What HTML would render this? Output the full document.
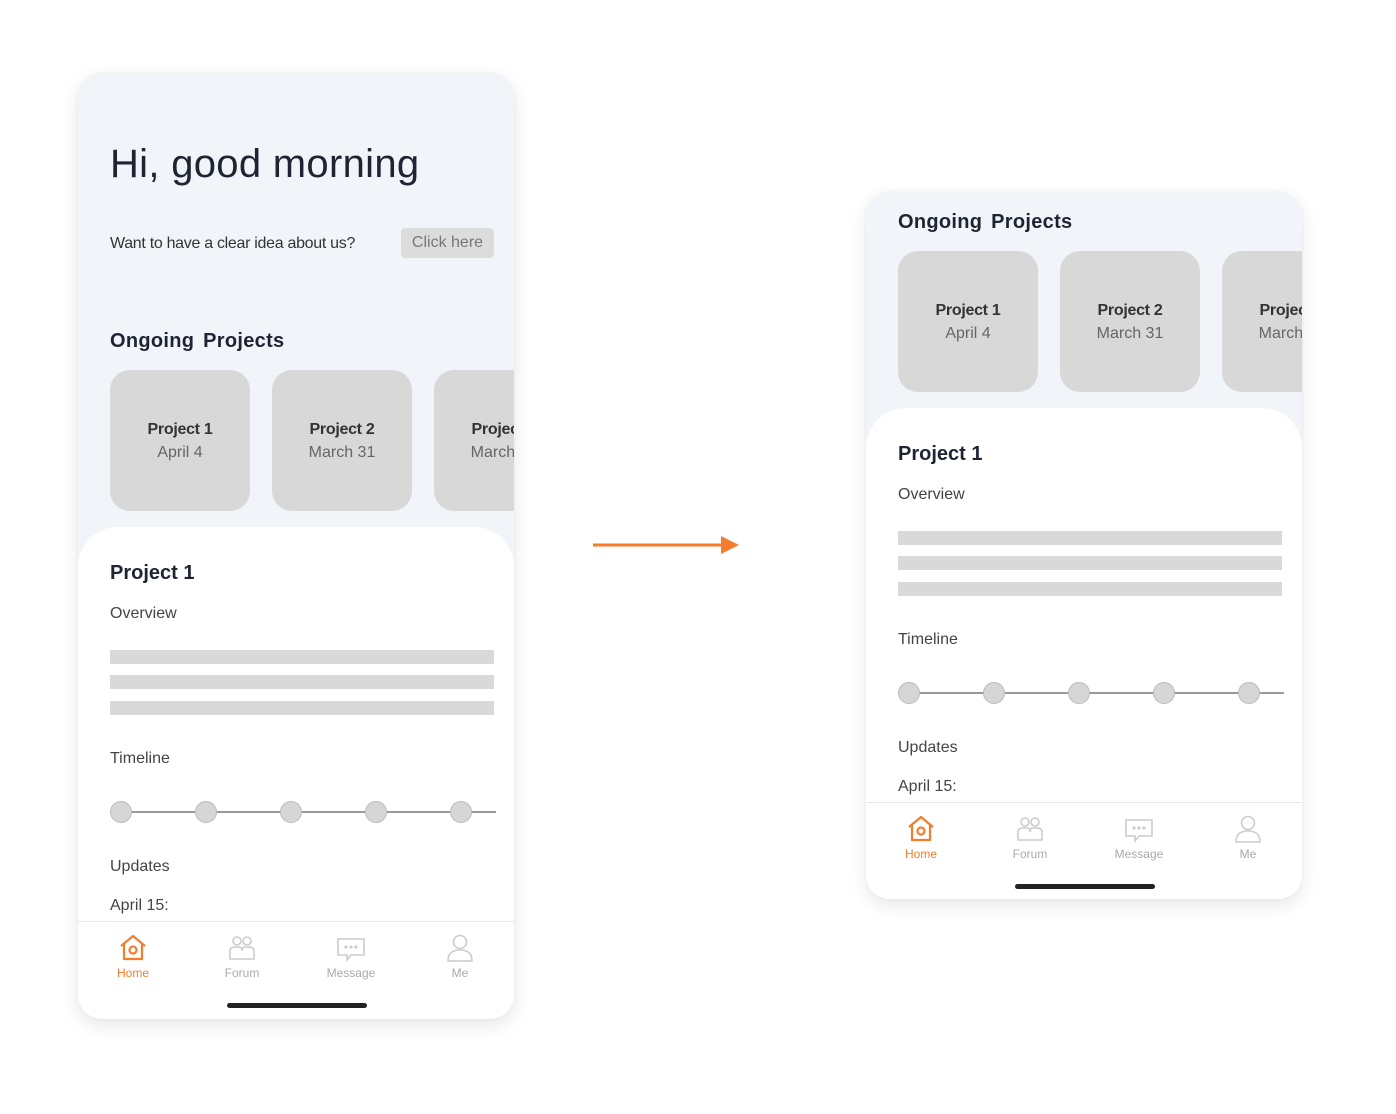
<!DOCTYPE html>
<html><head><meta charset="utf-8"><style>
*{margin:0;padding:0;box-sizing:border-box}
body{width:1396px;height:1114px;background:#fff;position:relative;overflow:hidden;font-family:"Liberation Sans",sans-serif}
.phone{position:absolute;width:436px;border-radius:24px;overflow:hidden;background:#fff;box-shadow:0 6px 18px rgba(0,0,0,0.10),0 0 3px rgba(0,0,0,0.04)}
.inner{position:absolute;left:0;width:436px;height:946px;background:#f1f4f9}
.a{position:absolute;white-space:nowrap}
.h1{left:32px;top:69px;font-size:40px;color:#1f2433;letter-spacing:0.3px}
.q{left:32px;top:162px;font-size:16px;color:#333;letter-spacing:-0.3px}
.btn{left:323px;top:155px;width:93px;height:30px;background:#dcdcdc;border-radius:4px;color:#777;font-size:16px;text-align:center;line-height:30px}
.og{left:32px;top:257px;font-size:20px;font-weight:bold;color:#1f2433;letter-spacing:0.3px;word-spacing:3px}
.card{position:absolute;top:297px;width:140px;height:141px;border-radius:20px;background:#d8d8d8;text-align:center;padding-top:51px;font-size:16px}
.card b{display:block;color:#333;letter-spacing:-0.3px}
.card span{display:block;color:#666;margin-top:5px}
.white{position:absolute;left:0;top:454px;width:436px;height:492px;background:#fff;border-radius:40px 40px 0 0}
.p1{left:32px;top:489px;font-size:20px;font-weight:bold;color:#1f2433}
.lab{left:32px;font-size:16px;color:#444}
.bar{position:absolute;left:32px;width:384px;height:14px;background:#d9d9d9}
.line{position:absolute;left:40px;top:738px;width:378px;height:2px;background:#999}
.dot{position:absolute;top:728px;width:22px;height:22px;border-radius:50%;background:#d6d6d6;border:1.5px solid #bbb}
.sep{position:absolute;left:0;top:848px;width:436px;height:1px;background:#e8e8e8}
.tab{position:absolute;top:860px;width:80px;text-align:center;font-size:12px;color:#aaa}
.tab svg{display:block;margin:0 auto 3px}
.ind{position:absolute;left:149px;top:930px;width:140px;height:5px;border-radius:3px;background:#222}
</style></head><body>

<div class="phone" style="left:78px;top:73px;height:946px">
<div class="inner" style="top:0">
<div class="a h1">Hi, good morning</div>
<div class="a q">Want to have a clear idea about us?</div>
<div class="a btn">Click here</div>
<div class="a og">Ongoing  Projects</div>
<div class="card" style="left:32px"><b>Project 1</b><span>April 4</span></div>
<div class="card" style="left:194px"><b>Project 2</b><span>March 31</span></div>
<div class="card" style="left:356px"><b>Project 3</b><span>March 30</span></div>
<div class="white"></div>
<div class="a p1">Project 1</div>
<div class="a lab" style="top:532px">Overview</div>
<div class="bar" style="top:577px"></div>
<div class="bar" style="top:602px"></div>
<div class="bar" style="top:628px"></div>
<div class="a lab" style="top:677px">Timeline</div>
<div class="line"></div>
<div class="dot" style="left:32px"></div><div class="dot" style="left:117px"></div><div class="dot" style="left:202px"></div><div class="dot" style="left:287px"></div><div class="dot" style="left:372px"></div>
<div class="a lab" style="top:785px">Updates</div>
<div class="a lab" style="top:824px">April 15:</div>
<div class="sep"></div>
<div class="tab" style="left:15px;color:#f47c2c"><svg width="30" height="30" viewBox="0 0 30 30" fill="none" stroke="#f47c2c" stroke-width="2.2" stroke-linejoin="round"><path d="M3 13 L15 3 L27 13"/><path d="M6 11 V26 H24 V11"/><circle cx="15" cy="17" r="3.5"/></svg>Home</div>
<div class="tab" style="left:124px"><svg width="30" height="30" viewBox="0 0 30 30" fill="none" stroke="#ccc" stroke-width="1.6"><circle cx="10" cy="8" r="4"/><circle cx="20" cy="8" r="4"/><path d="M3 26 V18 Q3 14 8 14 H12 Q15 14 15 18 Q15 14 18 14 H22 Q27 14 27 18 V26 Z"/></svg>Forum</div>
<div class="tab" style="left:233px"><svg width="30" height="30" viewBox="0 0 30 30" fill="none" stroke="#ccc" stroke-width="1.6"><path d="M2 6 H28 V22 H15 L11 27 V22 H2 Z"/><circle cx="10" cy="14" r=".8" fill="#ccc"/><circle cx="15" cy="14" r=".8" fill="#ccc"/><circle cx="20" cy="14" r=".8" fill="#ccc"/></svg>Message</div>
<div class="tab" style="left:342px"><svg width="30" height="30" viewBox="0 0 30 30" fill="none" stroke="#ccc" stroke-width="1.6"><circle cx="15" cy="9" r="6.5"/><path d="M3 28 Q3 17 15 17 Q27 17 27 28 Z"/></svg>Me</div>
<div class="ind"></div>
</div>
</div>

<svg style="position:absolute;left:590px;top:534px" width="152" height="22"><line x1="3" y1="11" x2="134" y2="11" stroke="#f47c2c" stroke-width="3"/><path d="M131 2 L149 11 L131 20 Z" fill="#f47c2c"/></svg>

<div class="phone" style="left:866px;top:192px;height:707px">
<div class="inner" style="top:-238px">
<div class="a h1">Hi, good morning</div>
<div class="a q">Want to have a clear idea about us?</div>
<div class="a btn">Click here</div>
<div class="a og">Ongoing  Projects</div>
<div class="card" style="left:32px"><b>Project 1</b><span>April 4</span></div>
<div class="card" style="left:194px"><b>Project 2</b><span>March 31</span></div>
<div class="card" style="left:356px"><b>Project 3</b><span>March 30</span></div>
<div class="white"></div>
<div class="a p1">Project 1</div>
<div class="a lab" style="top:532px">Overview</div>
<div class="bar" style="top:577px"></div>
<div class="bar" style="top:602px"></div>
<div class="bar" style="top:628px"></div>
<div class="a lab" style="top:677px">Timeline</div>
<div class="line"></div>
<div class="dot" style="left:32px"></div><div class="dot" style="left:117px"></div><div class="dot" style="left:202px"></div><div class="dot" style="left:287px"></div><div class="dot" style="left:372px"></div>
<div class="a lab" style="top:785px">Updates</div>
<div class="a lab" style="top:824px">April 15:</div>
<div class="sep"></div>
<div class="tab" style="left:15px;color:#f47c2c"><svg width="30" height="30" viewBox="0 0 30 30" fill="none" stroke="#f47c2c" stroke-width="2.2" stroke-linejoin="round"><path d="M3 13 L15 3 L27 13"/><path d="M6 11 V26 H24 V11"/><circle cx="15" cy="17" r="3.5"/></svg>Home</div>
<div class="tab" style="left:124px"><svg width="30" height="30" viewBox="0 0 30 30" fill="none" stroke="#ccc" stroke-width="1.6"><circle cx="10" cy="8" r="4"/><circle cx="20" cy="8" r="4"/><path d="M3 26 V18 Q3 14 8 14 H12 Q15 14 15 18 Q15 14 18 14 H22 Q27 14 27 18 V26 Z"/></svg>Forum</div>
<div class="tab" style="left:233px"><svg width="30" height="30" viewBox="0 0 30 30" fill="none" stroke="#ccc" stroke-width="1.6"><path d="M2 6 H28 V22 H15 L11 27 V22 H2 Z"/><circle cx="10" cy="14" r=".8" fill="#ccc"/><circle cx="15" cy="14" r=".8" fill="#ccc"/><circle cx="20" cy="14" r=".8" fill="#ccc"/></svg>Message</div>
<div class="tab" style="left:342px"><svg width="30" height="30" viewBox="0 0 30 30" fill="none" stroke="#ccc" stroke-width="1.6"><circle cx="15" cy="9" r="6.5"/><path d="M3 28 Q3 17 15 17 Q27 17 27 28 Z"/></svg>Me</div>
<div class="ind"></div>
</div>
</div>

</body></html>
